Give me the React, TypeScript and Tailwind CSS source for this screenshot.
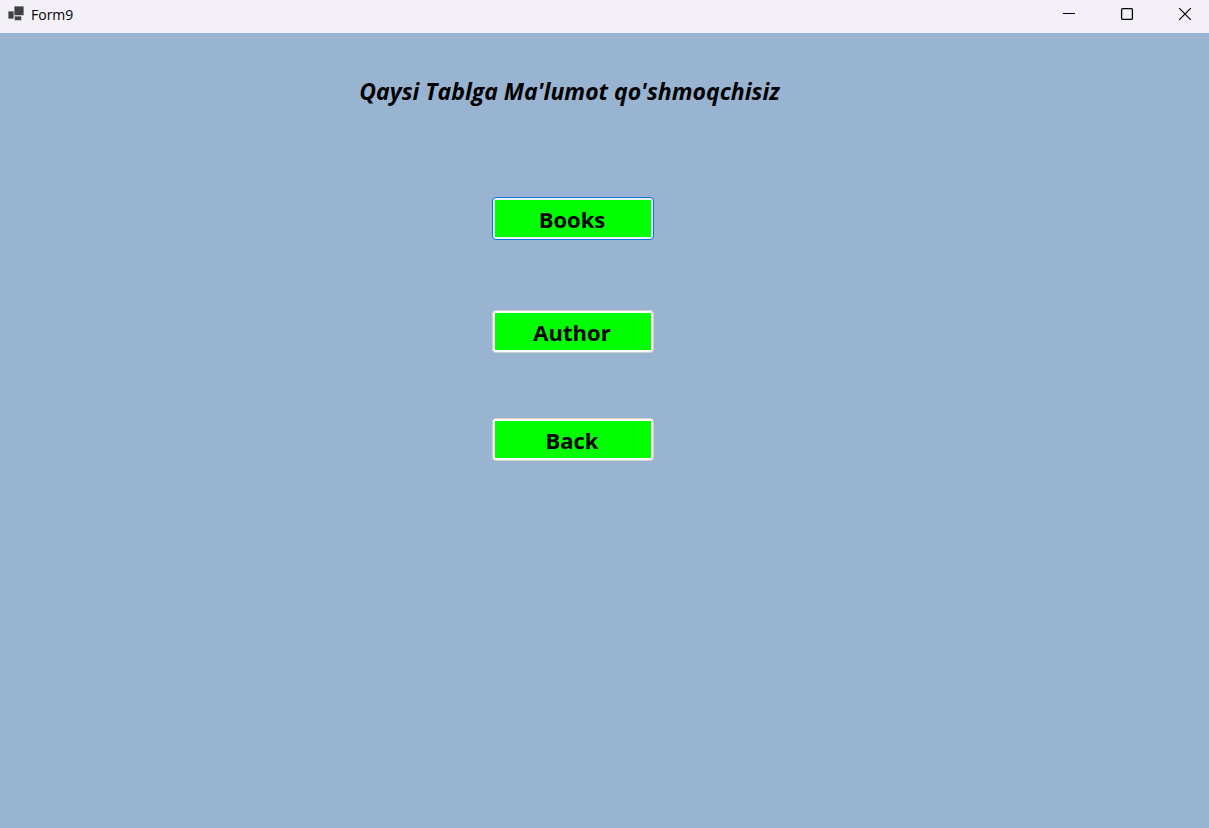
import type { ReactNode } from "react";

type FormButtonProps = { label: string; focused?: boolean };

function FormButton({ label, focused = false }: FormButtonProps) {
  return (
    <button
      type="button"
      className={`h-[43px] w-[162px] rounded-[4px] border p-[2px] outline-none ${
        focused ? "border-[#0078d4] bg-[#e8f0fa]" : "border-[#d0d0d0] bg-[#fdfdfd]"
      }`}
    >
      <span className="flex h-full items-center justify-center bg-[#00ff00] pr-[2px] text-[22px] leading-6 font-bold text-black">
        {label}
      </span>
    </button>
  );
}

function CaptionButton({ label, children }: { label: string; children: ReactNode }) {
  return (
    <button type="button" aria-label={label} className="flex h-7 w-12 items-center justify-center">
      <svg width="14" height="14" viewBox="0 0 14 14" fill="none" stroke="#000" aria-hidden="true">
        {children}
      </svg>
    </button>
  );
}

export default function App() {
  return (
    <div className="flex min-h-screen flex-col bg-[#99b4d1] font-['Open_Sans','Noto_Sans',sans-serif]">
      <header className="flex h-[33px] items-start justify-between bg-[#f4f0f7] pl-2">
        <div className="flex h-7 items-center gap-[7px]">
          <svg width="16" height="16" viewBox="0 0 16 16" aria-hidden="true">
            <path d="M0 5h6V0h10v10h-2v5H6v-2H0z" fill="#c9c7cb" />
            <path d="M6.5 .5h9v8.500h-9zM.5 5.500h5v7h-5zM7 10.500h6v3.500H7z" fill="#414141" />
          </svg>
          <span className="pt-[2px] font-['Open_Sans','Noto_Sans',sans-serif] text-[14px] leading-5 text-black">Form9</span>
        </div>
        <div className="flex gap-[10px]">
          <CaptionButton label="Minimize">
            <path d="M1 6.5h12" />
          </CaptionButton>
          <CaptionButton label="Maximize">
            <rect x="1.6" y="1.6" width="10.8" height="10.8" rx="1" strokeWidth="1.3" />
          </CaptionButton>
          <CaptionButton label="Close">
            <path d="M1.2 1.2l11.6 11.6M12.8 1.2L1.2 12.8" strokeWidth="1.2" />
          </CaptionButton>
        </div>
      </header>
      <main className="flex flex-1 flex-col items-center pt-[42px] pr-[63px]">
        <h1 className="pr-[7px] text-[23px] leading-8 font-bold whitespace-nowrap text-black italic">
          Qaysi Tablga Ma'lumot qo'shmoqchisiz
        </h1>
        <div className="flex flex-col pt-[90px]">
          <FormButton label="Books" focused />
          <div className="pt-[70px] pb-[65px]">
            <FormButton label="Author" />
          </div>
          <FormButton label="Back" />
        </div>
      </main>
    </div>
  );
}
